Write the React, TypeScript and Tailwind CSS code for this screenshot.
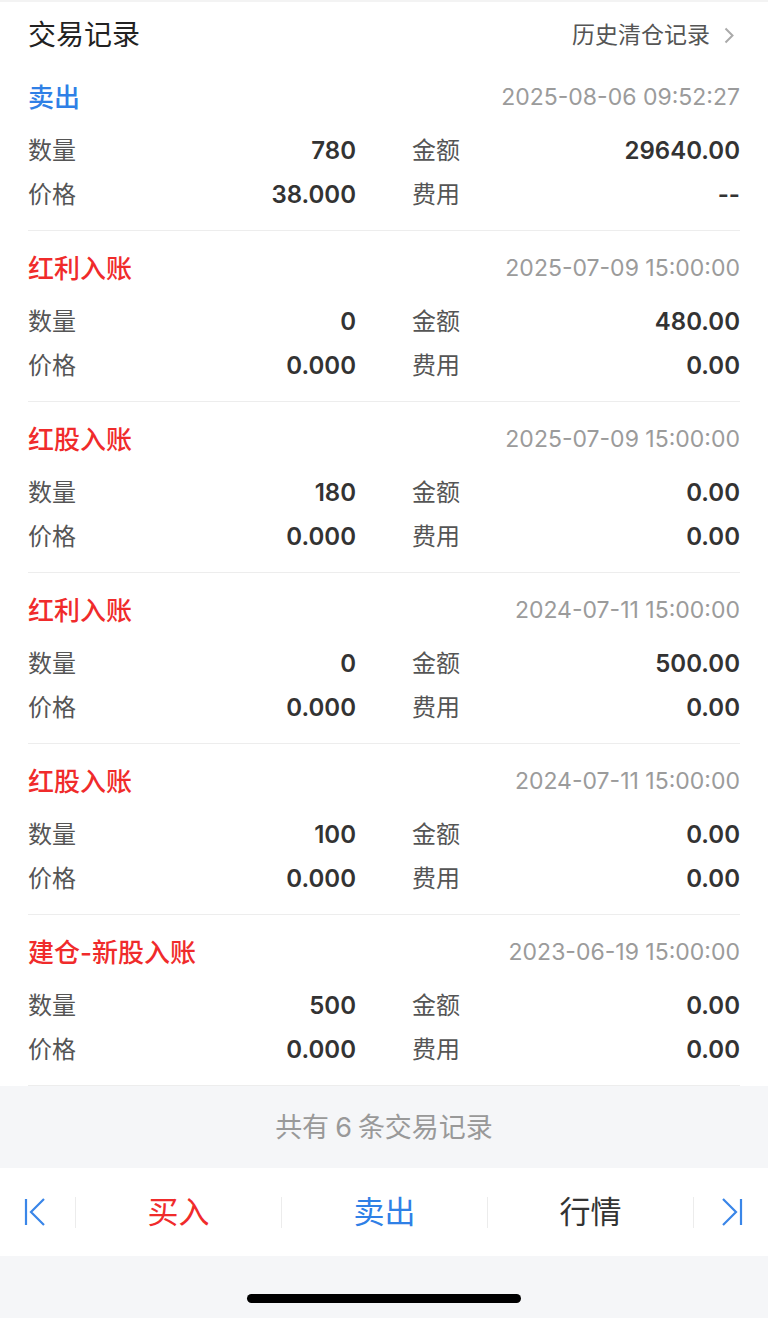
type Trade = {
  title: string;
  color: string;
  time: string;
  qty: string;
  amount: string;
  price: string;
  fee: string;
};

const trades: Trade[] = [
  { title: '卖出', color: 'text-[#2f80e6]', time: '2025-08-06 09:52:27', qty: '780', amount: '29640.00', price: '38.000', fee: '--' },
  { title: '红利入账', color: 'text-[#f02b2b]', time: '2025-07-09 15:00:00', qty: '0', amount: '480.00', price: '0.000', fee: '0.00' },
  { title: '红股入账', color: 'text-[#f02b2b]', time: '2025-07-09 15:00:00', qty: '180', amount: '0.00', price: '0.000', fee: '0.00' },
  { title: '红利入账', color: 'text-[#f02b2b]', time: '2024-07-11 15:00:00', qty: '0', amount: '500.00', price: '0.000', fee: '0.00' },
  { title: '红股入账', color: 'text-[#f02b2b]', time: '2024-07-11 15:00:00', qty: '100', amount: '0.00', price: '0.000', fee: '0.00' },
  { title: '建仓-新股入账', color: 'text-[#f02b2b]', time: '2023-06-19 15:00:00', qty: '500', amount: '0.00', price: '0.000', fee: '0.00' },
];

const font = { fontFamily: '"Inter", "Noto Sans CJK SC", sans-serif' };

function Cell({ label, value }: { label: string; value: string }) {
  return (
    <div className="flex h-[44px] items-center justify-between">
      <span className="text-[24px] text-[#555]">{label}</span>
      <span className="text-[24px] font-semibold text-[#333]">{value}</span>
    </div>
  );
}

function TradeItem({ t }: { t: Trade }) {
  return (
    <div className="border-b border-[#ededed] pt-[15px] pb-[13px]">
      <div className="flex h-[44px] items-center justify-between">
        <span className={`text-[26px] font-medium ${t.color}`}>{t.title}</span>
        <span className="text-[23px] text-[#9b9b9b]">{t.time}</span>
      </div>
      <div className="mt-[10px] grid grid-cols-2 gap-x-[56px]">
        <Cell label="数量" value={t.qty} />
        <Cell label="金额" value={t.amount} />
        <Cell label="价格" value={t.price} />
        <Cell label="费用" value={t.fee} />
      </div>
    </div>
  );
}

export default function App() {
  return (
    <div className="flex h-[1318px] w-[768px] flex-col bg-white" style={font}>
      <div className="h-[2px] bg-[#f3f3f3]" />
      <div className="flex h-[58px] items-center justify-between px-[28px] pt-[8px]">
        <span className="text-[28px] text-[#222]">交易记录</span>
        <div className="mr-[6px] flex items-center gap-[14px]">
          <span className="text-[23px] text-[#555]">历史清仓记录</span>
          <svg width="10" height="17" viewBox="0 0 10 17" fill="none">
            <path d="M1.5 1.5 L8.5 8.5 L1.5 15.5" stroke="#aaa" strokeWidth="2" />
          </svg>
        </div>
      </div>

      <div className="px-[28px]">
        {trades.map((t, i) => (
          <TradeItem key={i} t={t} />
        ))}
      </div>

      <div className="flex h-[82px] items-center justify-center bg-[#f5f6f8] pt-[2px]">
        <span className="text-[27px] text-[#999]">
          共有<span className="mx-[6px]">6</span>条交易记录
        </span>
      </div>

      <div className="flex h-[88px] items-center bg-white">
        <div className="flex w-[75px] justify-start pl-[24px]">
          <svg width="22" height="28" viewBox="0 0 22 28" fill="none">
            <path d="M2 1 V27" stroke="#3a86e8" strokeWidth="2.2" />
            <path d="M20 1 L7 14 L20 27" stroke="#3a86e8" strokeWidth="2.2" />
          </svg>
        </div>
        <div className="h-[31px] w-px bg-[#ececec]" />
        <div className="flex flex-1 justify-center text-[31px] text-[#f02b2b]">买入</div>
        <div className="h-[31px] w-px bg-[#ececec]" />
        <div className="flex flex-1 justify-center text-[31px] text-[#2f80e6]">卖出</div>
        <div className="h-[31px] w-px bg-[#ececec]" />
        <div className="flex flex-1 justify-center text-[31px] text-[#333]">行情</div>
        <div className="h-[31px] w-px bg-[#ececec]" />
        <div className="flex w-[74px] justify-end pr-[25px]">
          <svg width="22" height="28" viewBox="0 0 22 28" fill="none">
            <path d="M20 1 V27" stroke="#3a86e8" strokeWidth="2.2" />
            <path d="M2 1 L15 14 L2 27" stroke="#3a86e8" strokeWidth="2.2" />
          </svg>
        </div>
      </div>

      <div className="flex flex-1 justify-center bg-[#f5f6f8] pt-[38px]">
        <div className="h-[9px] w-[274px] rounded-full bg-black" />
      </div>
    </div>
  );
}
